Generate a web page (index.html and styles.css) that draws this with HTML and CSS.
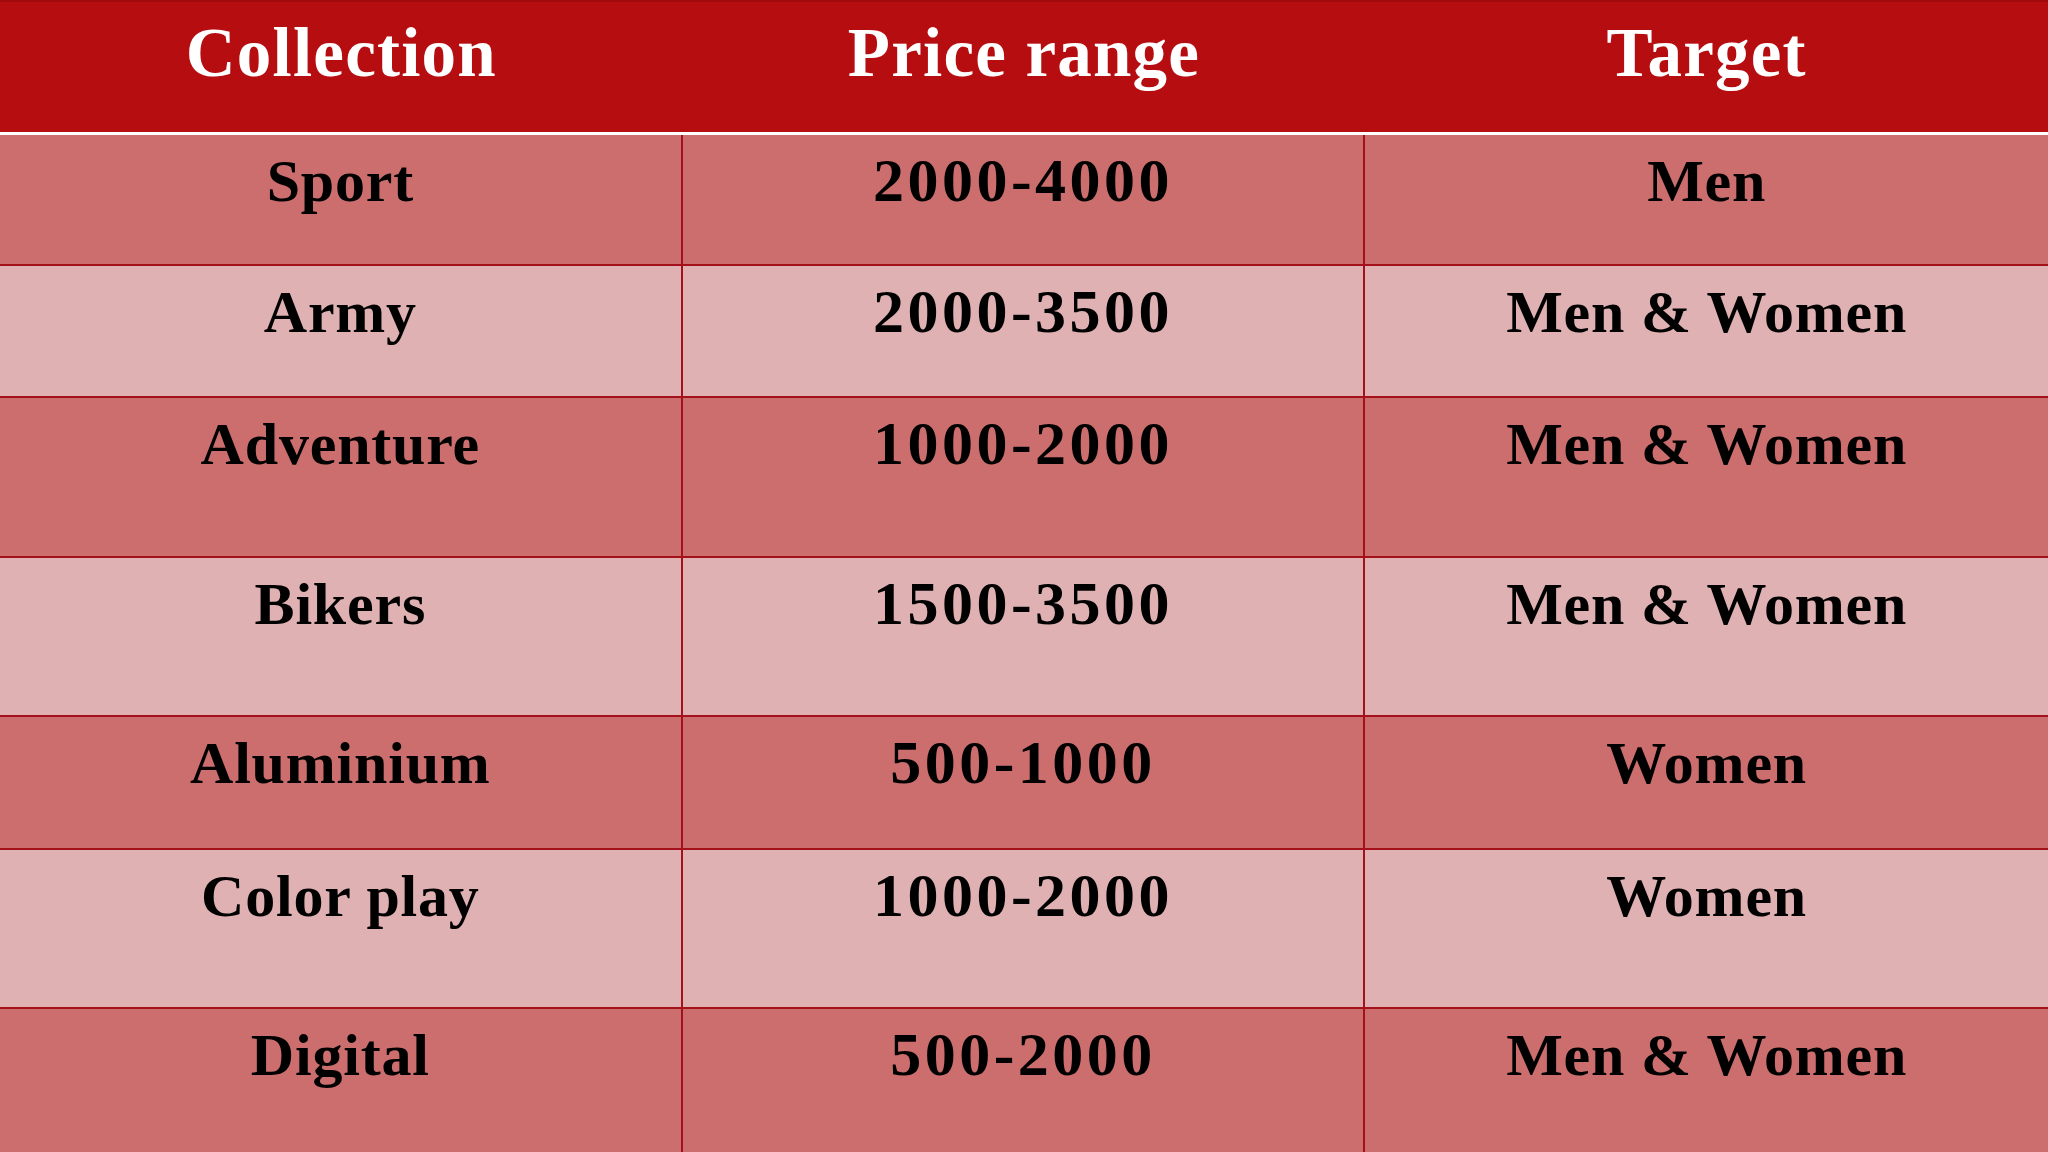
FILE: index.html
```html
<!DOCTYPE html>
<html>
<head>
<meta charset="utf-8">
<link rel="stylesheet" href="styles.css">
</head>
<body>
<div class="table">
  <div class="row head">
    <div class="cell">Collection</div>
    <div class="cell">Price range</div>
    <div class="cell">Target</div>
  </div>
  <div class="row dark h131">
    <div class="cell">Sport</div>
    <div class="cell num">2000-4000</div>
    <div class="cell">Men</div>
  </div>
  <div class="row light h132">
    <div class="cell">Army</div>
    <div class="cell num">2000-3500</div>
    <div class="cell">Men &amp; Women</div>
  </div>
  <div class="row dark h160">
    <div class="cell">Adventure</div>
    <div class="cell num">1000-2000</div>
    <div class="cell">Men &amp; Women</div>
  </div>
  <div class="row light h159">
    <div class="cell">Bikers</div>
    <div class="cell num">1500-3500</div>
    <div class="cell">Men &amp; Women</div>
  </div>
  <div class="row dark h133">
    <div class="cell">Aluminium</div>
    <div class="cell num">500-1000</div>
    <div class="cell">Women</div>
  </div>
  <div class="row light h159">
    <div class="cell">Color play</div>
    <div class="cell num">1000-2000</div>
    <div class="cell">Women</div>
  </div>
  <div class="row dark last">
    <div class="cell">Digital</div>
    <div class="cell num">500-2000</div>
    <div class="cell">Men &amp; Women</div>
  </div>
</div>
</body>
</html>
```
FILE: styles.css
```css
html, body {
  margin: 0;
  padding: 0;
  height: 100%;
  overflow: hidden;
}
body {
  background: #cd6e6e;
  font-family: "Liberation Serif", "Times New Roman", serif;
  font-weight: bold;
}
.table {
  display: flex;
  flex-direction: column;
  height: 1152px;
}
.row {
  display: grid;
  grid-template-columns: 1fr 1fr 1fr;
  box-sizing: border-box;
  border-bottom: 2px solid #a5111a;
  flex: none;
}
.row .cell {
  box-sizing: border-box;
  text-align: center;
  font-size: 60px;
  line-height: 69px;
  padding-top: 12px;
  letter-spacing: 0.8px;
  color: #000;
  border-right: 2px solid #a5111a;
}
.row .cell:last-child {
  border-right: none;
}
.row .num {
  font-size: 62px;
  letter-spacing: 3.5px;
  padding-top: 11px;
}
.head {
  height: 135px;
  background: #b60d11;
  border-top: 2px solid #a00a0c;
  border-bottom: 3px solid #ffffff;
}
.head .cell {
  color: #ffffff;
  font-size: 69px;
  line-height: 79px;
  padding-top: 12px;
  letter-spacing: 1.2px;
  border-right: none;
}
.dark { background: #cd6e6e; }
.light { background: #e0b1b2; }
.h131 { height: 131px; }
.h132 { height: 132px; }
.h133 { height: 133px; }
.h159 { height: 159px; }
.h160 { height: 160px; }
.last {
  flex: 1 1 auto;
  border-bottom: none;
}
```
